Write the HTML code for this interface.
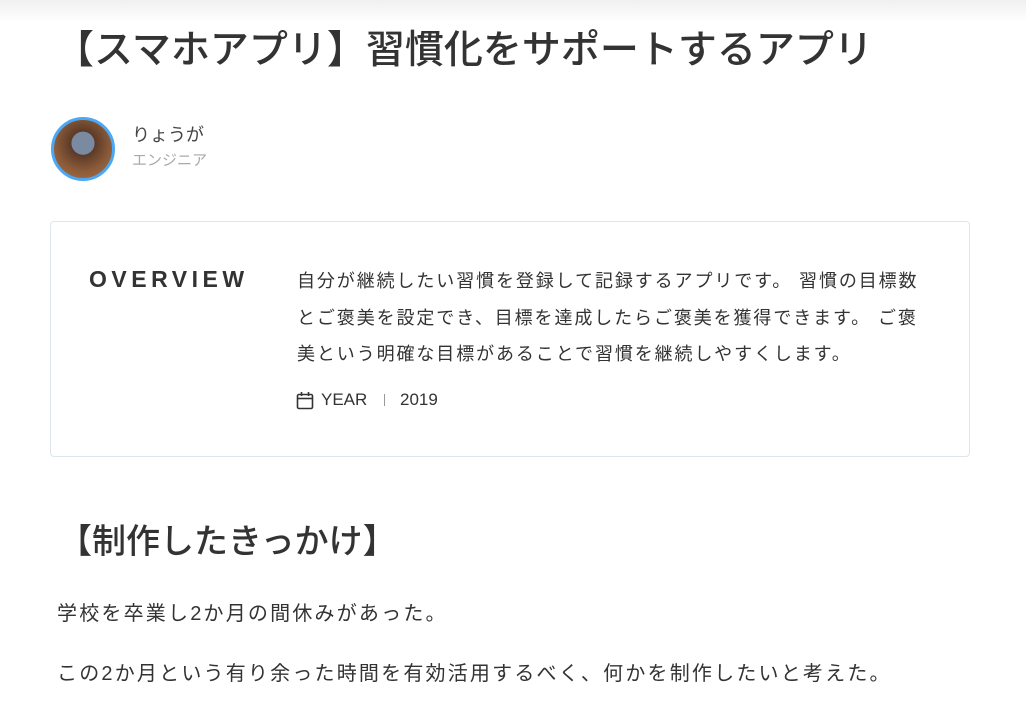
<!DOCTYPE html>
<html><head><meta charset="utf-8"><style>
body{margin:0;width:1026px;height:717px;overflow:hidden;background:#fff;font-family:"Liberation Sans","Noto Sans CJK JP",sans-serif;color:#333;position:relative}
.shade{position:absolute;left:0;top:0;width:1026px;height:22px;background:linear-gradient(#f0f0f0,#fff)}
.a{position:absolute;white-space:nowrap}
h1{position:absolute;left:55px;top:23px;margin:0;font-size:39px;font-weight:500;line-height:56px;color:#333}
.av{position:absolute;left:51px;top:117px;width:58px;height:58px;border-radius:50%;border:3px solid #4aa8f5;background:radial-gradient(circle at 50% 40%,#7a8aa0 0 25%,#5a3a28 26%,#8a5a38 60%,#b07048)}
.card{position:absolute;left:50px;top:221px;width:918px;height:234px;border:1px solid #dde6ea;border-radius:4px}
.ov{position:absolute;left:89px;top:266px;font-size:23px;font-weight:bold;letter-spacing:4.5px}
.desc{position:absolute;left:297px;top:263px;width:650px;font-size:18px;line-height:36.5px;letter-spacing:1.9px}
h2{position:absolute;left:58px;top:518px;margin:0;font-size:34px;font-weight:500;line-height:48px}
.p{position:absolute;left:57px;font-size:20px;letter-spacing:2.2px}
</style></head><body>
<div class="shade"></div>
<h1>【スマホアプリ】習慣化をサポートするアプリ</h1>
<div class="av"></div>
<div class="a" style="left:132px;top:121px;font-size:18px;color:#444">りょうが</div>
<div class="a" style="left:132px;top:149px;font-size:15px;color:#aaa">エンジニア</div>
<div class="card"></div>
<div class="ov">OVERVIEW</div>
<div class="desc">自分が継続したい習慣を登録して記録するアプリです。 習慣の目標数<br>とご褒美を設定でき、目標を達成したらご褒美を獲得できます。 ご褒<br>美という明確な目標があることで習慣を継続しやすくします。</div>
<svg class="a" style="left:296px;top:391px" width="18" height="19" viewBox="0 0 18 19"><rect x="1.5" y="3.5" width="15" height="14" rx="1.5" fill="none" stroke="#333" stroke-width="1.6"/><line x1="1.5" y1="7.5" x2="16.5" y2="7.5" stroke="#333" stroke-width="1.6"/><line x1="5.5" y1="1" x2="5.5" y2="5" stroke="#333" stroke-width="1.6"/><line x1="12.5" y1="1" x2="12.5" y2="5" stroke="#333" stroke-width="1.6"/></svg>
<div class="a" style="left:321px;top:390px;font-size:17px;color:#333">YEAR</div>
<div class="a" style="left:384px;top:394px;width:1px;height:12px;background:#999"></div>
<div class="a" style="left:400px;top:390px;font-size:17px;color:#333">2019</div>
<h2>【制作したきっかけ】</h2>
<div class="p" style="top:597px">学校を卒業し2か月の間休みがあった。</div>
<div class="p" style="top:657px">この2か月という有り余った時間を有効活用するべく、何かを制作したいと考えた。</div>
</body></html>
